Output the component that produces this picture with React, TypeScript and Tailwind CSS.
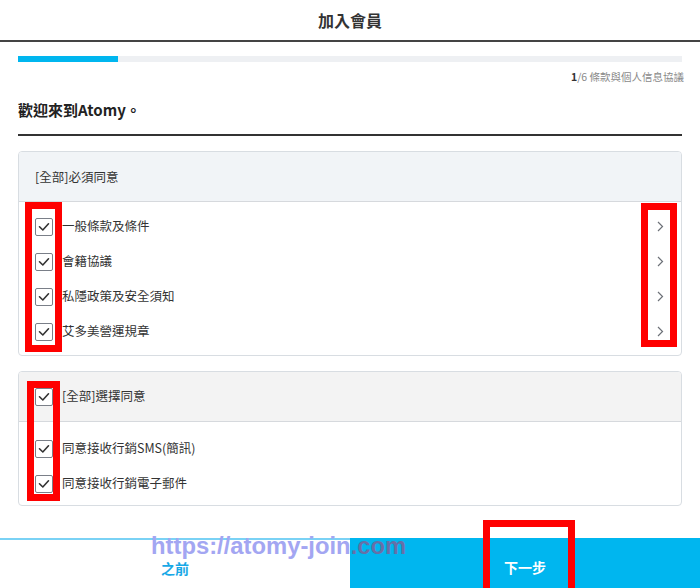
import React from "react";

const Check = () => (
  <span className="w-[18px] h-[18px] shrink-0 border border-[#7a7f88] rounded-[2px] bg-white flex items-center justify-center">
    <svg width="12" height="10" viewBox="0 0 12 10" fill="none">
      <polyline points="1.5,4.8 4.8,8 10.5,1.8" stroke="#333" strokeWidth="1.6" strokeLinecap="round" strokeLinejoin="round" />
    </svg>
  </span>
);

const Chevron = () => (
  <svg width="7" height="11" viewBox="0 0 7 11" fill="none">
    <polyline points="1,1 5.5,5.5 1,10" stroke="#6d7178" strokeWidth="1.2" />
  </svg>
);

const Row = ({ label, arrow }: { label: string; arrow?: boolean }) => (
  <div className="h-[35px] flex items-center">
    <Check />
    <span className="ml-[9px] text-[12.5px] text-[#333] flex-1">{label}</span>
    {arrow && (
      <span className="mr-[17px]">
        <Chevron />
      </span>
    )}
  </div>
);

export default function App() {
  return (
    <div className="relative w-[700px] h-[588px] overflow-hidden bg-white flex flex-col font-['Noto_Sans_CJK_TC','Noto_Sans',sans-serif]">
      <div className="h-[42px] border-b-2 border-[#444] flex items-center justify-center text-[16px] font-bold text-[#333]">
        加入會員
      </div>
      <div className="px-[18px]">
        <div className="mt-[14px] h-[6px] bg-[#eef0f3] flex">
          <div className="w-[100px] h-full bg-[#00b6ef]" />
        </div>
        <div className="mt-[7px] h-[16px] leading-[16px] text-right text-[10.5px] text-[#8a8a8a] -mr-[2px]">
          <span className="font-bold text-[#333]">1</span>/6 條款與個人信息協議
        </div>
        <div className="mt-[14px] h-[22px] leading-[22px] text-[15px] font-bold text-[#222]">歡迎來到Atomy。</div>
        <div className="mt-[13px] h-[2px] bg-[#333]" />

        <div className="mt-[15px] border border-[#d8dde2] rounded-[4px] overflow-hidden">
          <div className="h-[50px] bg-[#f1f4f7] border-b border-[#d6d9dd] flex items-center pl-[16px] pt-[1px] text-[12.5px] text-[#333]">
            [全部]必須同意
          </div>
          <div className="pl-[16px] pt-[7px] pb-[6px]">
            <Row label="一般條款及條件" arrow />
            <Row label="會籍協議" arrow />
            <Row label="私隱政策及安全須知" arrow />
            <Row label="艾多美營運規章" arrow />
          </div>
        </div>

        <div className="mt-[15px] border border-[#d8dde2] rounded-[4px] overflow-hidden">
          <div className="h-[50px] bg-[#f3f3f3] border-b border-[#d6d9dd] flex items-center pl-[16px]">
            <Check />
            <span className="ml-[9px] text-[12.5px] text-[#333]">[全部]選擇同意</span>
          </div>
          <div className="pl-[16px] pt-[9px] pb-[4px]">
            <Row label="同意接收行銷SMS(簡訊)" />
            <Row label="同意接收行銷電子郵件" />
          </div>
        </div>
      </div>

      <div className="mt-auto h-[50px] grid grid-cols-2">
        <div className="border-t-2 border-[#7ad2f5] bg-white flex items-center justify-center pt-[8px] text-[14px] font-bold text-[#18a8e6]">
          之前
        </div>
        <div className="bg-[#00b6ef] flex items-center justify-center pt-[8px] text-[14px] font-bold text-white">
          下一步
        </div>
      </div>

      <div className="absolute left-[151px] top-[531px] text-[23.8px] leading-[30px] font-bold font-['Liberation_Sans',Arial,sans-serif] text-[#a3a6f2] whitespace-nowrap">
        https://atomy-join<span className="text-[#6670a8]">.com</span>
      </div>

      <div className="absolute left-[25px] top-[202px] w-[37px] h-[150px] border-[7px] border-[#ff0000]" />
      <div className="absolute left-[641px] top-[203px] w-[36px] h-[144px] border-[7px] border-[#ff0000]" />
      <div className="absolute left-[27px] top-[381px] w-[33px] h-[120px] border-[7px] border-[#ff0000]" />
      <div className="absolute left-[483px] top-[520px] w-[92px] h-[75px] border-[7px] border-[#ff0000]" />
    </div>
  );
}
